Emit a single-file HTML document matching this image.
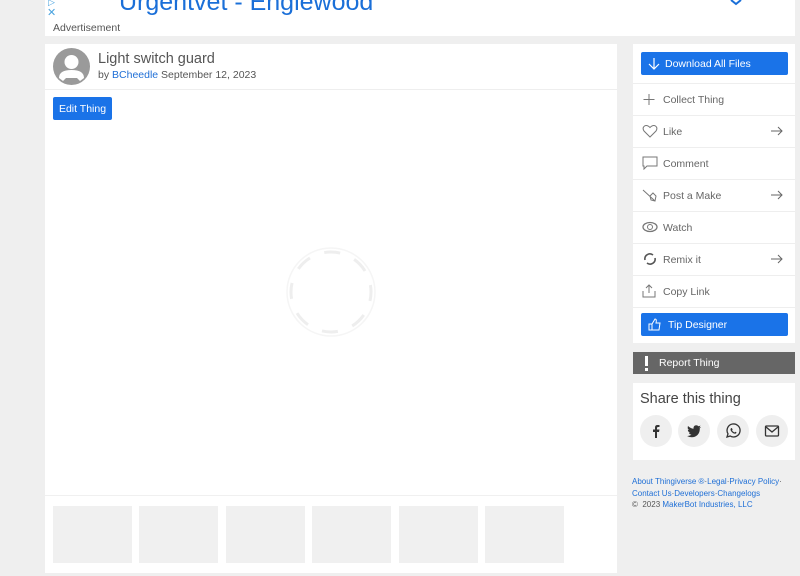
<!DOCTYPE html>
<html><head><meta charset="utf-8"><style>
*{box-sizing:border-box;margin:0;padding:0}
body{width:800px;height:576px;background:#efefef;font-family:"Liberation Sans",sans-serif;position:relative;overflow:hidden;color:#555}
.abs{position:absolute}
.card{position:absolute;background:#fff}
.row{position:absolute;left:0;width:162px;height:32px;border-top:1px solid #eee;font-size:10.5px;color:#666}
.row span{position:absolute;left:30px;top:10px}
.row svg.i{position:absolute;left:9px;top:8px}
.row .ar{position:absolute;right:12px;top:10px}
.thumb{position:absolute;top:506px;width:79px;height:57px;background:#f0f0f0}
.sh{position:absolute;top:415px;width:32px;height:32px;border-radius:50%;background:#efefef}
.sh svg{position:absolute;left:8px;top:8px}
a{color:#1f6fd6;text-decoration:none}
</style></head><body>
<div class="card" style="left:45px;top:0;width:750px;height:36px"></div>
<div class="abs" style="left:119px;top:-12px;font-size:25px;color:#1a6fd8;white-space:nowrap">Urgentvet - Englewood</div>
<div class="abs" style="left:48px;top:-3px;font-size:9px;color:#4aa3df">▷</div>
<div class="abs" style="left:47px;top:6px;font-size:11px;color:#4aa3df">✕</div>
<svg class="abs" style="left:730px;top:0" width="12" height="6"><path d="M1 0 L6 4 L11 0" stroke="#1a6fd8" stroke-width="2" fill="none"/></svg>
<div class="abs" style="left:53px;top:22px;font-size:10.5px;color:#555">Advertisement</div>

<div class="card" style="left:45px;top:44px;width:572px;height:529px"></div>
<svg class="abs" style="left:53px;top:48px" width="37" height="37"><circle cx="18.5" cy="18.5" r="18.5" fill="#9a9a9a"/><circle cx="18.5" cy="14" r="7" fill="#fff"/><path d="M6 30 Q6 22 18.5 22 Q31 22 31 30 L27 33 L24 30 L13 30 L10 33 Z" fill="#fff"/></svg>
<div class="abs" style="left:98px;top:51px;font-size:14.5px;color:#555">Light switch guard</div>
<div class="abs" style="left:98px;top:69px;font-size:10.5px;color:#555">by <a>BCheedle</a> September 12, 2023</div>
<div class="abs" style="left:45px;top:89px;width:572px;height:1px;background:#eee"></div>
<div class="abs" style="left:53px;top:97px;width:59px;height:23px;background:#1a73e8;border-radius:2px;color:#fff;font-size:10.5px;text-align:center;line-height:24px">Edit Thing</div>
<svg class="abs" style="left:285px;top:246px" width="92" height="92"><circle cx="46" cy="46" r="44" fill="none" stroke="#f5f5f5" stroke-width="1.5"/><circle cx="46" cy="46" r="40" fill="none" stroke="#eeeeee" stroke-width="3" stroke-dasharray="16 15.4" transform="rotate(-10 46 46)"/></svg>
<div class="abs" style="left:45px;top:495px;width:572px;height:1px;background:#f0f0f0"></div>
<div class="thumb" style="left:53px"></div><div class="thumb" style="left:139px"></div><div class="thumb" style="left:226px"></div><div class="thumb" style="left:312px"></div><div class="thumb" style="left:399px"></div><div class="thumb" style="left:485px"></div>

<div class="card" style="left:633px;top:44px;width:162px;height:299px">
<div class="abs" style="left:8px;top:8px;width:147px;height:23px;background:#1a73e8;border-radius:2px;color:#fff;font-size:10.5px;line-height:24px;padding-left:24px">Download All Files
<svg class="abs" style="left:7px;top:5px" width="12" height="13"><path d="M6 1V12M1 7L6 12L11 7" stroke="#fff" stroke-width="1.2" fill="none"/></svg></div>
<div class="row" style="top:39px"><svg class="i" width="14" height="14"><path d="M7 2V13M1.5 7.5H12.5" stroke="#777" fill="none"/></svg><span>Collect Thing</span></div>
<div class="row" style="top:71px"><svg class="i" width="16" height="14"><path d="M8 13L2 7Q0 4 2.5 2Q5 0.5 8 3.5Q11 0.5 13.5 2Q16 4 14 7Z" stroke="#777" fill="none"/></svg><span>Like</span><svg class="ar" width="12" height="10"><path d="M0 5H11M7 1L11 5L7 9" stroke="#666" fill="none"/></svg></div>
<div class="row" style="top:103px"><svg class="i" width="16" height="14"><path d="M1 1H15V10H5L2 13V10H1Z" stroke="#777" fill="none"/></svg><span>Comment</span></div>
<div class="row" style="top:135px"><svg class="i" width="16" height="15"><path d="M1 2L13 13M8 8L11 5L14 8L13 13L9 12Z" stroke="#777" fill="none"/></svg><span>Post a Make</span><svg class="ar" width="12" height="10"><path d="M0 5H11M7 1L11 5L7 9" stroke="#666" fill="none"/></svg></div>
<div class="row" style="top:167px"><svg class="i" width="16" height="14"><ellipse cx="8" cy="7" rx="7" ry="4.5" stroke="#777" fill="none" stroke-width="1.3"/><circle cx="8" cy="7" r="2.5" stroke="#777" fill="none"/></svg><span>Watch</span></div>
<div class="row" style="top:199px"><svg class="i" width="16" height="14"><path d="M3 8A5 5 0 0 1 11 3M13 6A5 5 0 0 1 5 11" stroke="#555" stroke-width="1.6" fill="none"/></svg><span>Remix it</span><svg class="ar" width="12" height="10"><path d="M0 5H11M7 1L11 5L7 9" stroke="#666" fill="none"/></svg></div>
<div class="row" style="top:231px"><svg class="i" width="14" height="14"><path d="M1 7V13H13V7M7 1V9M4 4L7 1L10 4" stroke="#777" fill="none"/></svg><span>Copy Link</span></div>
<div class="row" style="top:263px;height:36px"></div>
<div class="abs" style="left:8px;top:269px;width:147px;height:23px;background:#1a73e8;border-radius:2px;color:#fff;font-size:10.5px;line-height:24px;padding-left:27px">Tip Designer
<svg class="abs" style="left:7px;top:5px" width="14" height="13"><path d="M1 6H4V12H1ZM4 6L7 1Q9 1 8 5H12L11 12H4" stroke="#fff" fill="none"/></svg></div>
</div>

<div class="abs" style="left:633px;top:352px;width:162px;height:22px;background:#666;color:#fff;font-size:10.5px;line-height:23px;padding-left:26px">Report Thing
<div class="abs" style="left:12px;top:4px;width:3px;height:10px;background:#fff"></div><div class="abs" style="left:12px;top:16px;width:3px;height:3px;background:#fff"></div></div>

<div class="card" style="left:633px;top:383px;width:162px;height:77px"></div>
<div class="abs" style="left:640px;top:391px;font-size:14.5px;color:#444">Share this thing</div>
<div class="sh" style="left:640px"><svg width="16" height="16"><path d="M9 15V9H11L11.5 6.5H9V5Q9 4 10 4H11.5V2H9.5Q7 2 7 4.5V6.5H5V9H7V15Z" fill="#333"/></svg></div>
<div class="sh" style="left:678px"><svg width="16" height="16"><path d="M15 4Q14 4.5 13 4.5Q14 4 14.5 2.5Q13.5 3 12.5 3.3Q11 1.8 9 2.5Q7.3 3.3 7.5 5.7Q4.5 5.5 2 3Q1 5.5 3 7Q2.3 7 1.8 6.7Q2 9 4.2 9.6Q3.5 9.8 2.8 9.7Q3.5 11.5 5.5 11.6Q3.5 13.2 1 13Q7 16 11.5 12Q14 9.5 13.8 5.3Q14.5 4.8 15 4Z" fill="#333"/></svg></div>
<div class="sh" style="left:717px"><svg width="16" height="16"><path d="M2 14L3 10.8A6.5 6.5 0 1 1 5.2 13Z" stroke="#333" stroke-width="1.3" fill="none"/><path d="M5.8 5.5Q6.3 4.6 7 5.2L7.6 6.5Q7.5 7 7 7.4Q8 9 9.5 9.5Q10 9 10.3 8.7L11.5 9.3Q11.5 10.5 10.3 10.8Q7 10.5 5.5 7Q5.5 6 5.8 5.5Z" fill="#333"/></svg></div>
<div class="sh" style="left:756px"><svg width="16" height="16"><rect x="1.5" y="3" width="13" height="10" rx="1" stroke="#333" stroke-width="1.3" fill="none"/><path d="M2 4L8 9L14 4" stroke="#333" stroke-width="1.3" fill="none"/></svg></div>

<div class="abs" style="left:632px;top:476px;font-size:8px;line-height:11.5px;color:#555;width:165px">
<a>About Thingiverse ®</a>·<a>Legal</a>·<a>Privacy Policy</a>·<br><a>Contact Us</a>·<a>Developers</a>·<a>Changelogs</a><br>©&nbsp; 2023 <a>MakerBot Industries, LLC</a></div>
</body></html>
